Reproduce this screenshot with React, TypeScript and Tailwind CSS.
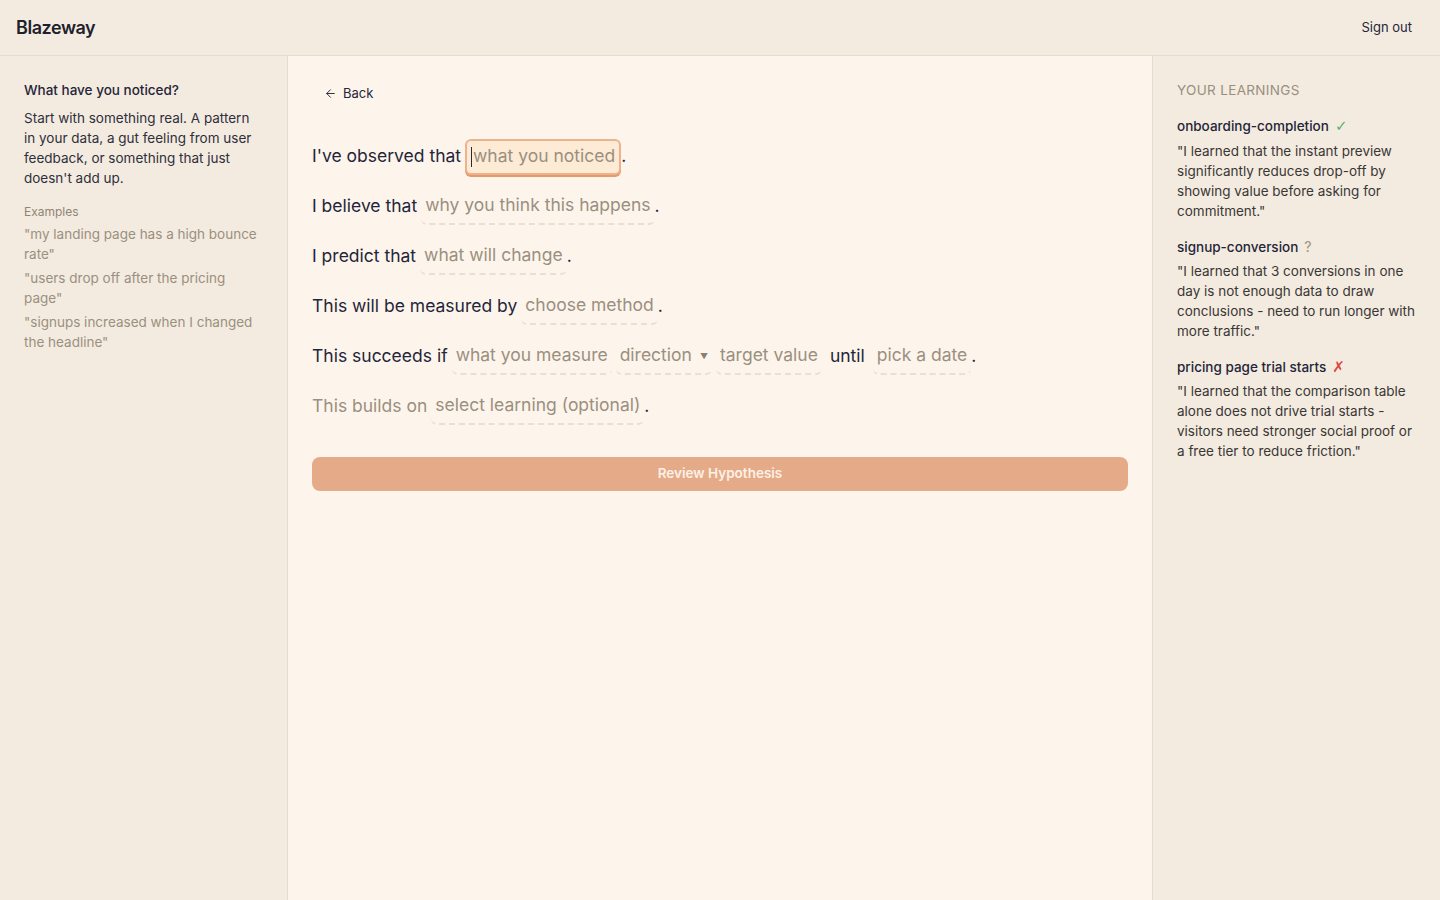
import React, { useState } from 'react';
import { ArrowLeft } from 'lucide-react';

type Learning = { title: string; status: 'pass' | 'unknown' | 'fail'; quote: string };

const learnings: Learning[] = [
  {
    title: 'onboarding-completion',
    status: 'pass',
    quote: '"I learned that the instant preview significantly reduces drop-off by showing value before asking for commitment."',
  },
  {
    title: 'signup-conversion',
    status: 'unknown',
    quote: '"I learned that 3 conversions in one day is not enough data to draw conclusions - need to run longer with more traffic."',
  },
  {
    title: 'pricing page trial starts',
    status: 'fail',
    quote: '"I learned that the comparison table alone does not drive trial starts - visitors need stronger social proof or a free tier to reduce friction."',
  },
];

const examples = [
  '"my landing page has a high bounce rate"',
  '"users drop off after the pricing page"',
  '"signups increased when I changed the headline"',
];

const StatusMark: React.FC<{ status: Learning['status'] }> = ({ status }) => {
  if (status === 'pass')
    return <span className="ml-1.5 text-[15px] leading-none text-[#5bb36a]" style={{ fontFamily: '"DejaVu Sans", sans-serif' }}>✓</span>;
  if (status === 'fail')
    return <span className="ml-1.5 text-[15px] leading-none text-[#e0473c]" style={{ fontFamily: '"DejaVu Sans", sans-serif' }}>✗</span>;
  return <span className="ml-1.5 text-[14px] leading-none text-[#a89d8d]">?</span>;
};

// Blank slot in the sentence builder
const Slot: React.FC<{ label: string; caret?: boolean }> = ({ label, caret }) => (
  <span className="inline-flex items-center h-9 px-1 rounded-md border-b-2 border-dashed border-[#eadfd0] text-[#9b8f7f]">
    {label}
    {caret && <span className="ml-2 text-[8px] text-[#8a7f70]">▼</span>}
  </span>
);

const ActiveSlot: React.FC<{ label: string }> = ({ label }) => (
  <span className="inline-flex items-center h-9 px-1 rounded-md border-2 border-[#ecb48e] bg-[#fdebd6] shadow-[0_2px_0_#e59a69] text-[#9b8f7f]">
    <span className="w-px h-5 bg-[#2a2a3a] mr-px" />
    {label}
  </span>
);

const Dot: React.FC = () => <span className="-ml-1 text-[#25253a]">.</span>;

const App: React.FC = () => {
  const [focused] = useState(true);

  return (
    <div className="min-h-screen flex flex-col bg-[#f3ebdf] text-[#25253a]" style={{ fontFamily: 'Inter, "Noto Sans", sans-serif' }}>
      <header className="h-14 shrink-0 flex items-center justify-between px-4 border-b border-[#e6dccd] bg-[#f3ebdf]">
        <div className="text-[18px] font-semibold tracking-tight text-[#1f1f2e]">Blazeway</div>
        <button className="text-[13px] text-[#25253a] pr-3">Sign out</button>
      </header>

      <div className="flex flex-1 min-h-[844px]">
        <aside className="w-72 shrink-0 border-r border-[#e6dccd] px-6 pt-6">
          <h3 className="text-[13.5px] font-medium text-[#25253a] mb-2">What have you noticed?</h3>
          <p className="text-[13.5px] leading-5 text-[#2f2f3d]">
            Start with something real. A pattern in your data, a gut feeling from user feedback, or something that just doesn't add up.
          </p>
          <div className="mt-4 text-xs text-[#8f8576]">Examples</div>
          <ul className="mt-1 space-y-1">
            {examples.map(e => (
              <li key={e} className="text-[13.5px] leading-5 text-[#9b9080]">{e}</li>
            ))}
          </ul>
        </aside>

        <main className="flex-1 bg-[#fdf5ec] px-6 pt-6">
          <button className="flex items-center gap-1.5 px-3 py-1 text-[13px] text-[#25253a]">
            <ArrowLeft size={13} strokeWidth={1.75} /> Back
          </button>

          <div className="mt-[31px] space-y-3.5 text-[17.5px] text-[#25253a]">
            <div className="flex items-center gap-1">
              <span>I've observed that</span>
              {focused ? <ActiveSlot label="what you noticed" /> : <Slot label="what you noticed" />}
              <Dot />
            </div>
            <div className="flex items-center gap-1">
              <span>I believe that</span>
              <Slot label="why you think this happens" />
              <Dot />
            </div>
            <div className="flex items-center gap-1">
              <span>I predict that</span>
              <Slot label="what will change" />
              <Dot />
            </div>
            <div className="flex items-center gap-1">
              <span>This will be measured by</span>
              <Slot label="choose method" />
              <Dot />
            </div>
            <div className="flex items-center gap-1">
              <span>This succeeds if</span>
              <Slot label="what you measure" />
              <Slot label="direction" caret />
              <Slot label="target value" />
              <span className="mx-1">until</span>
              <Slot label="pick a date" />
              <Dot />
            </div>
            <div className="flex items-center gap-1 text-[#9b8f7f]">
              <span>This builds on</span>
              <Slot label="select learning (optional)" />
              <Dot />
            </div>
          </div>

          <button className="mt-8 w-full h-[34px] rounded-lg bg-[#e5ab89] text-[13.5px] font-semibold text-[#fdf1e6]">
            Review Hypothesis
          </button>
        </main>

        <aside className="w-72 shrink-0 border-l border-[#e6dccd] px-6 pt-6">
          <h3 className="text-[13.5px] uppercase tracking-wide text-[#998f80] mb-4">Your learnings</h3>
          <div className="space-y-4">
            {learnings.map(l => (
              <div key={l.title}>
                <div className="text-[13.5px] font-medium text-[#25253a] mb-1 flex items-baseline">
                  {l.title}
                  <StatusMark status={l.status} />
                </div>
                <p className="text-[13.5px] leading-5 text-[#3a3735]">{l.quote}</p>
              </div>
            ))}
          </div>
        </aside>
      </div>
    </div>
  );
};

export default App;
